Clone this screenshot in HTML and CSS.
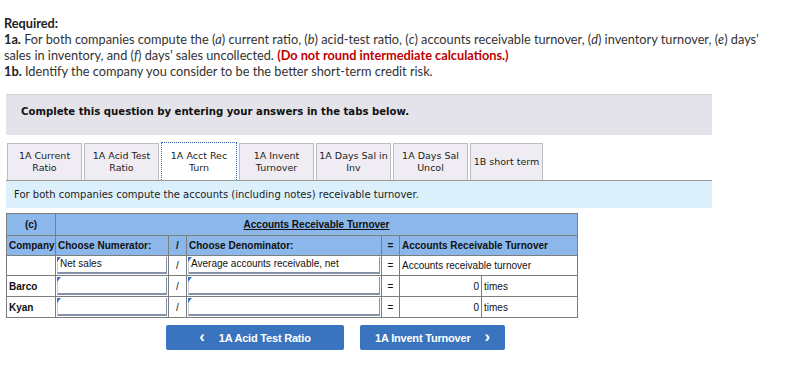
FILE: index.html
```html
<!DOCTYPE html>
<html>
<head>
<meta charset="utf-8">
<link rel="stylesheet" href="styles.css">
</head>
<body>
<div class="required">
  <div class="req-title">Required:</div>
  <div><b>1a.</b> For both companies compute the (<i>a</i>) current ratio, (<i>b</i>) acid-test ratio, (<i>c</i>) accounts receivable turnover, (<i>d</i>) inventory turnover, (<i>e</i>) days’ sales in inventory, and (<i>f</i>) days’ sales uncollected. <span class="red">(Do not round intermediate calculations.)</span></div>
  <div><b>1b.</b> Identify the company you consider to be the better short-term credit risk.</div>
</div>

<div class="panel">
  <div class="instr">Complete this question by entering your answers in the tabs below.</div>
  <div class="tabs">
    <div class="tab">1A Current<br>Ratio</div>
    <div class="tab">1A Acid Test<br>Ratio</div>
    <div class="tab active">1A Acct Rec<br>Turn</div>
    <div class="tab">1A Invent<br>Turnover</div>
    <div class="tab">1A Days Sal in<br>Inv</div>
    <div class="tab">1A Days Sal<br>Uncol</div>
    <div class="tab">1B short term</div>
  </div>
  <div class="prompt">For both companies compute the accounts (including notes) receivable turnover.</div>

  <table class="grid">
    <colgroup>
      <col class="c1"><col class="c2"><col class="c3"><col class="c4"><col class="c5"><col class="c6"><col class="c7">
    </colgroup>
    <tr class="h1">
      <td class="center">(c)</td>
      <td colspan="6" class="center"><u>Accounts Receivable Turnover</u></td>
    </tr>
    <tr class="h2">
      <td>Company</td>
      <td>Choose Numerator:</td>
      <td class="center">/</td>
      <td>Choose Denominator:</td>
      <td class="center">=</td>
      <td colspan="2">Accounts Receivable Turnover</td>
    </tr>
    <tr class="r3">
      <td></td>
      <td class="inp"><div class="box">Net sales</div></td>
      <td class="center">/</td>
      <td class="inp"><div class="box">Average accounts receivable, net</div></td>
      <td class="center">=</td>
      <td colspan="2">Accounts receivable turnover</td>
    </tr>
    <tr class="r4">
      <td class="co">Barco</td>
      <td class="inp"><div class="box"></div></td>
      <td class="center">/</td>
      <td class="inp"><div class="box"></div></td>
      <td class="center">=</td>
      <td class="right">0</td>
      <td>times</td>
    </tr>
    <tr class="r4">
      <td class="co">Kyan</td>
      <td class="inp"><div class="box"></div></td>
      <td class="center">/</td>
      <td class="inp"><div class="box"></div></td>
      <td class="center">=</td>
      <td class="right">0</td>
      <td>times</td>
    </tr>
  </table>

  <div class="nav">
    <div class="btn prev"><span class="chev">&lsaquo;</span>1A Acid Test Ratio</div>
    <div class="btn next">1A Invent Turnover<span class="chev">&rsaquo;</span></div>
  </div>
</div>
</body>
</html>
```

FILE: styles.css
```css
html, body {
  margin: 0;
  padding: 0;
  background: #ffffff;
}

body {
  width: 811px;
  height: 392px;
  overflow: hidden;
}

.required {
  padding: 15px 0 0 4px;
  width: 762px;
  font-family: Lato, "Liberation Sans", sans-serif;
  font-size: 12.75px;
  line-height: 16px;
  color: #333;
}

.required b {
  color: #222;
}

.req-title {
  font-weight: bold;
  color: #222;
}

.red {
  color: #c00000;
  font-weight: bold;
}

.panel {
  margin: 15px 0 0 6px;
  width: 706px;
}

.instr {
  height: 41px;
  box-sizing: border-box;
  background: #e4e3e9;
  border-top: 1px solid #d2d2d8;
  font-family: "DejaVu Sans", Verdana, sans-serif;
  font-size: 10.15px;
  font-weight: bold;
  color: #111;
  padding: 11px 0 0 15px;
}

.tabs {
  display: flex;
  gap: 2px;
  margin-top: 7px;
  padding-left: 1px;
  align-items: flex-end;
}

.tab {
  width: 75px;
  height: 37px;
  box-sizing: border-box;
  border: 1px solid #bdbdbd;
  border-bottom: none;
  background: #efedf3;
  font-family: "DejaVu Sans", Verdana, sans-serif;
  font-size: 9.5px;
  line-height: 12px;
  color: #222;
  text-align: center;
  display: flex;
  align-items: center;
  justify-content: center;
}

.tab.active {
  background: #ffffff;
  border: 1px dotted #3566b0;
  border-bottom: none;
  height: 38px;
  width: 76px;
}

.tab:last-child {
  width: 73px;
}

.prompt {
  height: 28px;
  box-sizing: border-box;
  border-top: 1px solid #9a9a9a;
  background: #dcf0fc;
  font-family: "DejaVu Sans", Verdana, sans-serif;
  font-size: 10px;
  color: #222;
  padding: 8px 0 0 8px;
}

.grid {
  margin-top: 5px;
  border-collapse: collapse;
  table-layout: fixed;
  width: 571px;
  font-family: "Liberation Sans", Arial, sans-serif;
  font-size: 10px;
  color: #111;
}

.c1 { width: 49px; }
.c2 { width: 113px; }
.c3 { width: 18px; }
.c4 { width: 195px; }
.c5 { width: 18px; }
.c6 { width: 82px; }
.c7 { width: 96px; }

.grid td {
  border: 1px solid #7d7d7d;
  padding: 0 2px;
  white-space: nowrap;
  overflow: hidden;
}

.h1 td {
  background: #8bb7ea;
  height: 21px;
  font-weight: bold;
}

.h2 td {
  background: #8bb7ea;
  height: 19px;
  font-weight: bold;
}

.r3 td,
.r4 td {
  background: #fff;
}

.co {
  font-weight: bold;
}

.center {
  text-align: center;
}

.right {
  text-align: right;
}

.grid td.inp {
  padding: 1px;
  position: relative;
}

.box {
  height: 17px;
  box-sizing: border-box;
  border-bottom: 2px solid #8593a8;
  border-right: 1px solid #8593a8;
  border-left: 1px solid #c8d0dc;
  padding-left: 2px;
  line-height: 14px;
}

.r4 .box {
  height: 18px;
}

.inp::before {
  content: "";
  position: absolute;
  left: 1px;
  top: 1px;
  border-top: 5px solid #3a72c8;
  border-right: 4px solid transparent;
}

.nav {
  display: flex;
  gap: 16px;
  margin: 7px 0 0 160px;
}

.btn {
  height: 25px;
  box-sizing: border-box;
  background: #3a74be;
  border-radius: 2px;
  color: #fff;
  font-family: "Liberation Sans", Arial, sans-serif;
  font-weight: bold;
  font-size: 11px;
  display: flex;
  align-items: center;
  justify-content: center;
  letter-spacing: -0.2px;
}

.btn.prev {
  width: 178px;
}

.btn.next {
  width: 145px;
}

.chev {
  font-size: 17px;
  line-height: 1;
  margin-top: -2px;
}

.prev .chev {
  margin-right: 14px;
}

.next .chev {
  margin-left: 14px;
}
```
